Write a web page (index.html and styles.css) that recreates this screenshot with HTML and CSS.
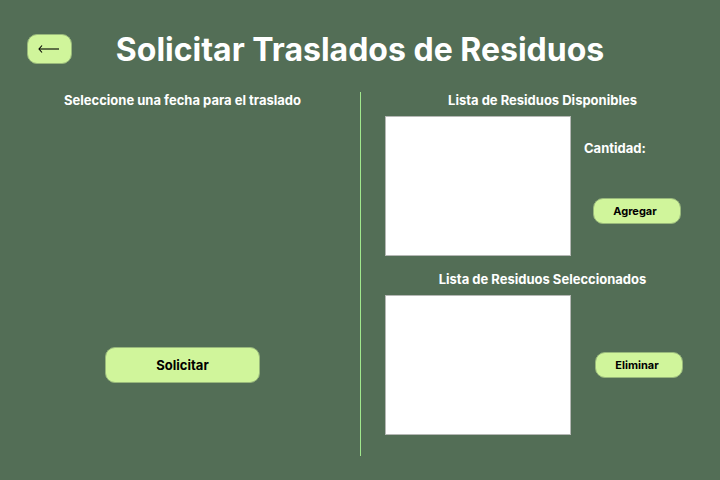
FILE: index.html
```html
<!DOCTYPE html>
<html lang="es">
<head>
<meta charset="utf-8">
<meta name="viewport" content="width=device-width, initial-scale=1">
<title>Solicitar Traslados de Residuos</title>
<link rel="stylesheet" href="styles.css">
</head>
<body>
<header class="header">
  <button class="button back" type="button" aria-label="Volver">
    <svg class="arrow" viewBox="0 0 23 10" width="23" height="10" aria-hidden="true">
      <path d="M1 5H21" fill="none" stroke="#000" stroke-opacity=".55" stroke-width="2"/>
      <path d="M4 1.5L1 5L4 8.5" fill="none" stroke="#000" stroke-width="1.1"/>
    </svg>
  </button>
  <h1 class="title">Solicitar Traslados de Residuos</h1>
</header>
<main class="main">
  <section class="request">
    <h2 class="heading">Seleccione una fecha para el traslado</h2>
    <button class="button submit" type="button">Solicitar</button>
  </section>
  <section class="lists">
    <div class="group">
      <h2 class="heading"><label for="available">Lista de Residuos Disponibles</label></h2>
      <div class="row">
        <select class="list" id="available" multiple></select>
        <div class="side">
          <label class="heading amount-label" for="amount">Cantidad:</label>
          <input class="amount" id="amount" type="text">
          <button class="button action add" type="button">Agregar</button>
        </div>
      </div>
    </div>
    <div class="group">
      <h2 class="heading"><label for="selected">Lista de Residuos Seleccionados</label></h2>
      <div class="row">
        <select class="list" id="selected" multiple></select>
        <div class="side">
          <button class="button action remove" type="button">Eliminar</button>
        </div>
      </div>
    </div>
  </section>
</main>
</body>
</html>
```
FILE: styles.css
```css
* {
  box-sizing: border-box;
}

body {
  margin: 0;
  min-height: 100vh;
  padding: 28px 0 24px;
  display: flex;
  flex-direction: column;
  background: #536e56;
  color: #fff;
  font-family: Inter, "Liberation Sans", sans-serif;
}

.header {
  display: grid;
  grid-template-columns: 45px 1fr 45px;
  align-items: start;
  padding: 0 27px;
  margin-bottom: 20px;
}

.title {
  margin: 0;
  font-size: 32px;
  line-height: 44px;
  font-weight: 700;
  text-align: center;
  white-space: nowrap;
}

.button {
  border: 1px solid #98b87b;
  border-radius: 10px;
  background: #d0f59b;
  color: #000;
  font-family: inherit;
  font-weight: 700;
  padding: 0;
}

.back {
  height: 30px;
  margin-top: 6px;
  display: flex;
  align-items: center;
  justify-content: center;
}

.arrow {
  display: block;
}

.main {
  flex: 1;
  display: grid;
  grid-template-columns: 1fr 1fr;
}

.heading {
  margin: 0;
  font-size: 13px;
  line-height: 16px;
  font-weight: 700;
  text-align: center;
}

.request {
  display: flex;
  flex-direction: column;
  align-items: center;
  justify-content: space-between;
  padding: 0 0 73px 5px;
}

.submit {
  width: 155px;
  height: 36px;
  font-size: 13px;
}

.lists {
  display: flex;
  flex-direction: column;
  gap: 15px;
  padding-left: 24px;
  border-left: 1px solid #a0e78c;
}

.group > .heading {
  padding-right: 20px;
}

.row {
  display: grid;
  grid-template-columns: 186px 1fr;
  margin-top: 8px;
}

.list {
  height: 140px;
  border: 1px solid #b5b8b5;
  border-radius: 0;
  background: #fff;
}

.side {
  display: flex;
  flex-direction: column;
  align-items: flex-start;
  padding: 24px 0 0 13px;
}

.amount-label {
  text-align: left;
}

.amount {
  width: 88px;
  height: 26px;
  border: 0;
  padding: 0;
  background: transparent;
  color: #fff;
  font: inherit;
}

.action {
  width: 88px;
  height: 26px;
  padding-right: 4px;
  font-size: 11px;
}

.add {
  margin: 16px 0 0 9px;
}

.remove {
  margin: 33px 0 0 11px;
}
```
